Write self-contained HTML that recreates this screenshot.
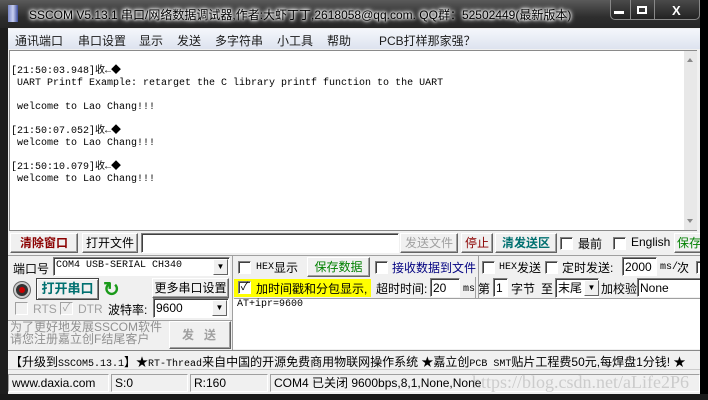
<!DOCTYPE html>
<html><head><meta charset="utf-8"><style>
*{margin:0;padding:0;box-sizing:border-box}
body{width:708px;height:400px;overflow:hidden;background:#1e1e1e;font-family:"Liberation Sans","Noto Sans CJK SC",sans-serif;font-size:12px;color:#000;position:relative}
.a{position:absolute;white-space:nowrap}
.title{left:0;top:0;width:708px;height:28px;background:linear-gradient(#5a5a5a,#2e2e2e 60%,#262626);}
.client{left:8px;top:28px;width:692px;height:366px;background:#f0f0f0}
.menu{left:8px;top:29px;width:692px;height:20px;background:linear-gradient(#f4f6fb,#dde3ef);font-size:12px;color:#1a1a1a}
.txt{left:9px;top:50px;width:688px;height:181px;background:#fff;border:1px solid #8a8a8a;border-right:none}
.mono{font-family:"Liberation Mono","Noto Sans CJK SC",monospace;font-size:10px;line-height:12px}
.btn{position:absolute;background:#f0f0f0;border:1px solid;border-color:#fff #646464 #646464 #fff;box-shadow:inset -1px -1px 0 #a0a0a0;text-align:center;font-size:12px;line-height:18px}
.cb{position:absolute;width:13px;height:13px;background:#fff;border:1px solid;border-color:#808080 #fff #fff #808080;box-shadow:inset 1px 1px 0 #404040}
.in{position:absolute;background:#fff;border:1px solid;border-color:#808080 #fff #fff #808080;box-shadow:inset 1px 1px 0 #404040;font-size:12px;line-height:18px;padding-left:2px}
.dd{position:absolute;width:15px;background:#f0f0f0;border:1px solid;border-color:#fff #646464 #646464 #fff;font-size:8px;text-align:center}
.st{position:absolute;top:375px;height:18px;border:1px solid;border-color:#a0a0a0 #fff #fff #a0a0a0;font-size:12px;line-height:16px;padding-left:3px}
</style></head><body>
<div class="a title"></div>
<div class="a" style="left:8px;top:5px;width:10px;height:17px;background:linear-gradient(90deg,#7a88c8,#c8d0f0,#3a4a9a)"></div>
<div class="a" style="left:29px;top:6px;color:#000;font-size:12px;text-shadow:0 0 6px #fff,0 0 4px #fff,0 0 3px #fff,0 0 2px #fff">SSCOM V5.13.1 串口/网络数据调试器,作者:大虾丁丁,2618058@qq.com. QQ群：52502449(最新版本)</div>
<div class="a" style="left:610px;top:0;width:90px;height:20px;border:1px solid #888;border-top:none;border-radius:0 0 5px 5px;background:linear-gradient(#4a4a4a,#222)"></div>
<div class="a" style="left:630px;top:0;width:1px;height:20px;background:#888"></div>
<div class="a" style="left:654px;top:0;width:1px;height:20px;background:#888"></div>
<div class="a" style="left:614px;top:11px;width:10px;height:3px;background:#fff"></div>
<div class="a" style="left:637px;top:6px;width:10px;height:8px;border:2px solid #fff"></div>
<div class="a" style="left:672px;top:3px;color:#fff;font-weight:bold;font-size:13px">X</div>
<div class="a client"></div>
<div class="a menu"><span class="a" style="left:7px;top:3px">通讯端口</span><span class="a" style="left:70px;top:3px">串口设置</span><span class="a" style="left:131px;top:3px">显示</span><span class="a" style="left:169px;top:3px">发送</span><span class="a" style="left:207px;top:3px">多字符串</span><span class="a" style="left:269px;top:3px">小工具</span><span class="a" style="left:319px;top:3px">帮助</span><span class="a" style="left:371px;top:3px">PCB打样那家强？</span></div>
<div class="a txt"></div>
<div class="a" style="left:684px;top:51px;width:13px;height:179px;background:#e8e8e8"></div>
<div class="a" style="left:687px;top:58px;border:3px solid transparent;border-bottom:4px solid #888;border-top:none"></div>
<div class="a" style="left:687px;top:219px;border:3px solid transparent;border-top:4px solid #888;border-bottom:none"></div>
<div class="a mono" style="left:11px;top:66px;white-space:pre">[21:50:03.948]收←◆
 UART Printf Example: retarget the C library printf function to the UART

 welcome to Lao Chang!!!

[21:50:07.052]收←◆
 welcome to Lao Chang!!!

[21:50:10.079]收←◆
 welcome to Lao Chang!!!</div>

<div class="btn" style="left:10px;top:233px;width:68px;height:20px;color:#8b0000;font-weight:bold">清除窗口</div>
<div class="btn" style="left:82px;top:233px;width:56px;height:20px">打开文件</div>
<div class="in" style="left:141px;top:233px;width:258px;height:20px"></div>
<div class="btn" style="left:400px;top:233px;width:58px;height:20px;color:#a0a0a0">发送文件</div>
<div class="btn" style="left:461px;top:233px;width:32px;height:20px;color:#8b0000">停止</div>
<div class="btn" style="left:495px;top:233px;width:62px;height:20px;color:#007070;font-weight:bold">清发送区</div>
<div class="cb" style="left:560px;top:237px"></div><span class="a" style="left:578px;top:235px">最前</span>
<div class="cb" style="left:613px;top:237px"></div><span class="a" style="left:631px;top:235px">English</span>
<div class="btn" style="left:674px;top:233px;width:30px;height:20px;color:#008000;text-align:left;padding-left:2px">保存</div>
<div class="a" style="left:8px;top:255px;width:692px;height:1px;background:#a0a0a0"></div>

<span class="a" style="left:13px;top:260px">端口号</span>
<div class="in mono" style="left:53px;top:257px;width:177px;height:19px;font-size:10px;line-height:16px">COM4 USB-SERIAL CH340</div>
<div class="dd" style="left:213px;top:259px;height:16px;line-height:14px">▼</div>
<div class="a" style="left:232px;top:256px;width:1px;height:95px;background:#a0a0a0"></div>
<div class="cb" style="left:238px;top:261px"></div><span class="a mono" style="left:256px;top:262px;font-size:10px">HEX</span><span class="a" style="left:274px;top:259px">显示</span>
<div class="btn" style="left:307px;top:257px;width:63px;height:20px;color:#008000">保存数据</div>
<div class="cb" style="left:375px;top:261px"></div><span class="a" style="left:392px;top:259px;color:#000080">接收数据到文件</span>
<div class="a" style="left:478px;top:256px;width:1px;height:42px;background:#a0a0a0"></div>
<div class="cb" style="left:482px;top:261px"></div><span class="a mono" style="left:499px;top:262px;font-size:10px">HEX</span><span class="a" style="left:517px;top:259px">发送</span>
<div class="cb" style="left:545px;top:261px"></div><span class="a" style="left:562px;top:259px">定时发送:</span>
<div class="in" style="left:622px;top:257px;width:35px;height:19px">2000</div>
<span class="a mono" style="left:660px;top:262px;font-size:10px">ms/</span><span class="a" style="left:677px;top:259px">次</span>
<div class="cb" style="left:696px;top:261px;width:5px"></div>

<div class="a" style="left:14px;top:282px;width:16px;height:16px;border-radius:50%;background:#333;border:2px solid #ccc;box-shadow:0 0 0 1px #666"></div>
<div class="a" style="left:19px;top:287px;width:6px;height:6px;border-radius:50%;background:#c00"></div>
<div class="btn" style="left:36px;top:278px;width:63px;height:22px;color:#007070;font-weight:bold;font-size:13px;line-height:20px;border:1px solid #444;box-shadow:inset 1px 1px 0 #fff,inset -1px -1px 0 #888">打开串口</div>
<div class="a" style="left:103px;top:280px;color:#1a9a1a;font-size:20px;font-weight:bold;line-height:20px">↻</div>
<div class="btn" style="left:152px;top:278px;width:77px;height:20px">更多串口设置</div>
<div class="a" style="left:234px;top:279px;width:137px;height:18px;background:#ffff00"></div>
<div class="cb" style="left:238px;top:281px;font-size:11px;line-height:10px;text-align:center">✓</div><span class="a" style="left:256px;top:280px">加时间戳和分包显示,</span>
<span class="a" style="left:376px;top:280px">超时时间:</span>
<div class="in" style="left:430px;top:278px;width:30px;height:19px">20</div>
<span class="a mono" style="left:463px;top:284px;font-size:10px">ms</span>
<div class="a" style="left:475px;top:277px;width:1px;height:21px;background:#a0a0a0"></div>
<span class="a" style="left:478px;top:280px">第</span>
<div class="in" style="left:493px;top:278px;width:15px;height:19px">1</div>
<span class="a" style="left:511px;top:280px">字节</span><span class="a" style="left:541px;top:280px">至</span>
<div class="in" style="left:555px;top:278px;width:44px;height:20px">末尾</div>
<div class="dd" style="left:584px;top:280px;height:16px;line-height:14px">▼</div>
<span class="a" style="left:601px;top:280px">加校验</span>
<div class="in" style="left:637px;top:278px;width:64px;height:19px">None</div>
<div class="a" style="left:234px;top:298px;width:466px;height:1px;background:#a0a0a0"></div>
<div class="a" style="left:233px;top:299px;width:467px;height:50px;background:#fff"></div>
<span class="a mono" style="left:237px;top:299px">AT+ipr=9600</span>

<div class="cb" style="left:15px;top:302px;background:#f0f0f0;border-color:#a0a0a0 #fff #fff #a0a0a0;box-shadow:none"></div><span class="a" style="left:33px;top:302px;color:#a0a0a0">RTS</span>
<div class="cb" style="left:60px;top:302px;background:#f0f0f0;border-color:#a0a0a0 #fff #fff #a0a0a0;box-shadow:none;color:#a0a0a0;font-size:11px;line-height:10px;text-align:center">✓</div><span class="a" style="left:78px;top:302px;color:#a0a0a0">DTR</span>
<span class="a" style="left:108px;top:301px">波特率:</span>
<div class="in" style="left:153px;top:298px;width:76px;height:20px">9600</div>
<div class="dd" style="left:212px;top:300px;height:16px;line-height:14px">▼</div>
<div class="a" style="left:8px;top:320px;width:225px;height:1px;background:#a0a0a0"></div>
<div class="a" style="left:10px;top:321px;color:#909090;line-height:12px">为了更好地发展SSCOM软件<br>请您注册嘉立创F结尾客户</div>
<div class="btn" style="left:169px;top:321px;width:62px;height:28px;color:#a0a0a0;font-weight:bold;line-height:26px;letter-spacing:10px;padding-left:8px">发送</div>

<div class="a" style="left:8px;top:350px;width:692px;height:20px;background:#f0f0f0;border-top:1px solid #888;border-bottom:1px solid #ccc"></div>
<span class="a" style="left:10px;top:353px;font-size:12px">【升级到<span class="mono">SSCOM5.13.1</span>】★<span class="mono">RT-Thread</span>来自中国的开源免费商用物联网操作系统 ★嘉立创<span class="mono">PCB SMT</span>贴片工程费50元,每焊盘1分钱! ★</span>
<div class="st" style="left:8px;top:374px;width:101px">www.daxia.com</div>
<div class="st" style="left:111px;top:374px;width:77px">S:0</div>
<div class="st" style="left:190px;top:374px;width:78px">R:160</div>
<div class="st" style="left:270px;top:374px;width:430px">COM4 已关闭  9600bps,8,1,None,None</div>
<span class="a" style="left:472px;top:372px;font-family:'Liberation Serif',serif;font-size:18px;color:rgba(160,160,160,.45)">https://blog.csdn.net/aLife2P6</span>
<div class="a" style="left:700px;top:0;width:8px;height:400px;background:#000"></div>
<div class="a" style="left:0;top:394px;width:708px;height:6px;background:#1a1a1a"></div>
</body></html>
